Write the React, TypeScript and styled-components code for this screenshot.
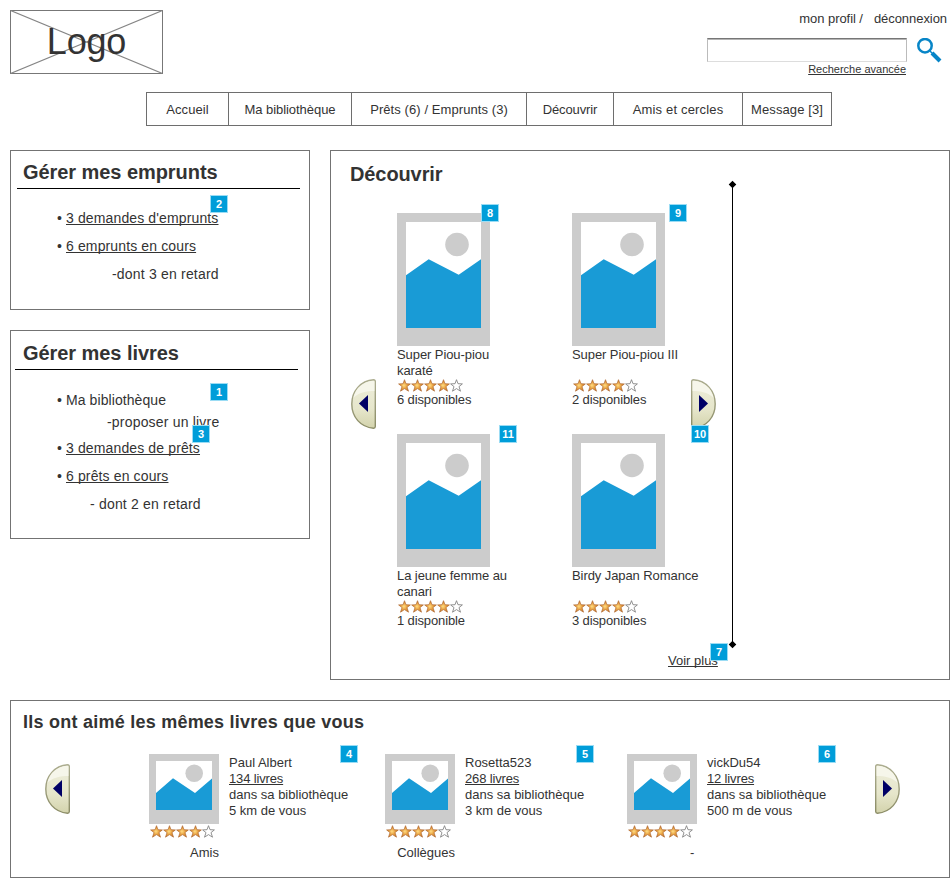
import React from "react";
import styled, { createGlobalStyle } from "styled-components";

const GlobalStyle = createGlobalStyle`
  * { box-sizing: border-box; }
  body {
    margin: 0;
    background: #fff;
    color: #333;
    font-family: "Liberation Sans", Arial, sans-serif;
    font-size: 13px;
    line-height: 16px;
  }
  h1, h2, p, ul { margin: 0; padding: 0; }
  svg { display: block; flex: none; }
`;

const Page = styled.div`
  width: 950px;
  height: 878px;
  overflow: hidden;
`;

const Header = styled.header`
  display: flex;
  justify-content: space-between;
  height: 92px;
  padding: 10px 3px 0 10px;
`;

const LogoBox = styled.div`
  position: relative;
  width: 153px;
  height: 64px;
`;

const LogoText = styled.h1`
  position: absolute;
  inset: 0;
  font-size: 36px;
  font-weight: 400;
  line-height: 64px;
  letter-spacing: -0.2px;
  text-align: center;
`;

const HeaderTools = styled.div`
  display: flex;
  flex-direction: column;
  width: 240px;
`;

const AccountLinks = styled.div`
  display: flex;
  justify-content: flex-end;
  gap: 11px;
  height: 28px;
  padding-top: 1px;
  letter-spacing: -0.06px;
  white-space: nowrap;
`;

const SearchRow = styled.div`
  display: flex;
  gap: 10px;
  height: 24px;
`;

const SearchInput = styled.input`
  width: 200px;
  height: 24px;
  padding: 0 4px;
  border: 1px solid #bbb;
  border-top: 1px solid #767676;
  border-bottom-color: #ddd;
  box-shadow: inset 0 1px 0 #b4b4b4;
  outline: none;
`;

const Link = styled.a<{ $track?: number }>`
  color: #333;
  text-decoration: underline;
  text-decoration-thickness: 1px;
  text-decoration-skip-ink: none;
  text-underline-offset: 1px;
  letter-spacing: ${(p) => p.$track ?? 0}px;
`;

const AdvancedSearch = styled.div`
  width: 199px;
  font-size: 11px;
  line-height: 14px;
  text-align: right;
`;

const Nav = styled.nav`
  display: flex;
  width: 686px;
  height: 34px;
  margin-left: 146px;
  border: 1px solid #6e6e6e;
  border-right: 0;
`;

const NavItem = styled.a<{ $width: number; $track?: number }>`
  width: ${(p) => p.$width}px;
  border-right: 1px solid #6e6e6e;
  line-height: 33px;
  text-align: center;
  white-space: nowrap;
  letter-spacing: ${(p) => p.$track ?? 0}px;
`;

const Main = styled.main`
  display: grid;
  grid-template-columns: 300px 620px;
  gap: 20px;
  padding: 24px 0 0 10px;
`;

const Sidebar = styled.div`
  display: flex;
  flex-direction: column;
  gap: 20px;
`;

const Panel = styled.section<{ $height: number }>`
  position: relative;
  height: ${(p) => p.$height}px;
  border: 1px solid #737373;
`;

const SidebarTitle = styled.h2<{ $indent: number; $height: number }>`
  width: 283px;
  height: ${(p) => p.$height}px;
  margin-left: ${(p) => p.$indent}px;
  padding: ${(p) => p.$height - 29}px 0 0 ${(p) => 12 - p.$indent}px;
  border-bottom: 1px solid #000;
  font-size: 20px;
  line-height: 24px;
  letter-spacing: -0.06px;
`;

const Entries = styled.ul<{ $top: number }>`
  padding: ${(p) => p.$top}px 0 0 46px;
  font-size: 14px;
  list-style: none;
`;

const Entry = styled.li<{ $height?: number; $indent?: number }>`
  height: ${(p) => p.$height ?? 28}px;
  padding-left: ${(p) => p.$indent ?? 0}px;
  line-height: 28px;
  white-space: nowrap;
  letter-spacing: ${(p) => (p.$indent ? 0.19 : 0.08)}px;
`;

const Bullet = styled.span`
  display: inline-block;
  width: 9px;
`;

const Badge = styled.span<{ $x: number; $y: number }>`
  position: absolute;
  left: ${(p) => p.$x}px;
  top: ${(p) => p.$y}px;
  z-index: 1;
  width: 18px;
  height: 18px;
  border: 1px solid #9bdcf4;
  background: #009dd9;
  color: #fff;
  font-size: 11px;
  font-weight: 700;
  line-height: 16px;
  text-align: center;
`;

const DiscoverPanel = styled(Panel)`
  display: flex;
  gap: 12px;
`;

const DiscoverContent = styled.div`
  width: 385px;
`;

const DiscoverTitle = styled.h2`
  height: 62px;
  padding: 11px 0 0 19px;
  font-size: 20px;
  line-height: 24px;
  letter-spacing: -0.1px;
`;

const Carousel = styled.div`
  display: flex;
  padding-left: 20px;
`;

const BookArrow = styled.div<{ $gap?: number }>`
  margin-top: 166px;
  margin-right: ${(p) => p.$gap ?? 0}px;
`;

const Books = styled.div`
  display: grid;
  grid-template-columns: 175px 119px;
  grid-auto-rows: 221px;
`;

const BookTitle = styled.p`
  height: 33px;
  padding-top: 1px;
  white-space: pre;
  letter-spacing: -0.08px;
`;

const Stock = styled.p`
  line-height: 15px;
  letter-spacing: -0.12px;
`;

const MoreRow = styled.div`
  margin-top: -2px;
  padding-left: 337px;
  white-space: nowrap;
`;

const DividerSlot = styled.div`
  margin-top: 29px;
`;

const Readers = styled(Panel)`
  margin: 20px 0 0 10px;
`;

const ReadersTitle = styled.h2`
  height: 53px;
  padding: 9px 0 0 12px;
  font-size: 18px;
  line-height: 24px;
  letter-spacing: 0.24px;
`;

const ReaderRow = styled.div`
  display: grid;
  grid-template-columns: 104px 236px 242px 248px 25px;
  padding-left: 34px;
`;

const ReaderArrow = styled.div`
  margin-top: 10px;
`;

const Reader = styled.div`
  display: flex;
  gap: 10px;
`;

const Portrait = styled.div`
  width: 70px;
`;

const Circle = styled.p`
  margin-top: 7px;
  text-align: right;
  white-space: pre;
`;

const ReaderInfo = styled.div`
  padding-top: 1px;
  white-space: nowrap;
`;

const StarStrip = styled.div`
  height: 13px;
`;

const PortraitStars = styled(StarStrip)`
  margin-top: 1px;
`;

type PlaceholderProps = {
  w: number;
  h: number;
  pad: number;
  inner: [number, number];
  mountain: string;
  sun: [number, number, number];
};

function Placeholder({ w, h, pad, inner, mountain, sun }: PlaceholderProps) {
  return (
    <svg width={w} height={h}>
      <rect width={w} height={h} fill="#ccc" />
      <rect x={pad} y={pad} width={inner[0]} height={inner[1]} fill="#fff" />
      <circle cx={sun[0]} cy={sun[1]} r={sun[2]} fill="#ccc" />
      <path d={mountain} fill="#199bd6" />
    </svg>
  );
}

const Cover = () => (
  <Placeholder w={93} h={133} pad={9} inner={[75, 106]} mountain="M9 62.2 31.7 46.3 61.7 61.8 84 46.3V115H9Z" sun={[60, 31.5, 11.8]} />
);

const Avatar = () => (
  <Placeholder w={70} h={70} pad={7} inner={[56, 49]} mountain="M7 39 24 24.2 46 39 63 24.4V56H7Z" sun={[45.2, 19.3, 8.8]} />
);

const STAR = "M6.5.7 8 4.7 12.4 4.9 9 7.6 10.5 12.2 6.5 9.6 2.5 12.2 4 7.6.6 4.9 5 4.7Z";

function Stars() {
  return (
    <svg width="67" height="13">
      <defs>
        <radialGradient id="gold" cx="45%" cy="50%" r="55%">
          <stop offset="0" stopColor="#ffdc82" />
          <stop offset=".5" stopColor="#e8a040" />
          <stop offset="1" stopColor="#c4742a" />
        </radialGradient>
      </defs>
      {[0, 1, 2, 3].map((i) => (
        <path key={i} d={STAR} transform={`translate(${1 + i * 13} 0)`} fill="url(#gold)" stroke="#b06a34" strokeWidth=".7" />
      ))}
      <path d={STAR} transform="translate(53 0)" fill="#fff" stroke="#858585" strokeWidth=".9" />
    </svg>
  );
}

function Arrow({ right }: { right?: boolean }) {
  return (
    <svg width="25" height="50" viewBox="0 0 25 50">
      <defs>
        <linearGradient id="shell" x1="0" y1="0" x2="0" y2="1">
          <stop offset="0" stopColor="#eeeedb" />
          <stop offset=".6" stopColor="#e6e6cb" />
          <stop offset="1" stopColor="#d3d3ac" />
        </linearGradient>
        <linearGradient id="rim" x1="0" y1="0" x2="0" y2="1">
          <stop offset="0" stopColor="#acad90" />
          <stop offset="1" stopColor="#8b8c66" />
        </linearGradient>
      </defs>
      <g transform={right ? "translate(25 0) scale(-1 1)" : undefined}>
        <path d="M22.6.8C9.5 1.8.8 12 .8 25S9.5 48.2 22.6 49.2Q24.3 49.2 24.3 47.5V2.5Q24.3.8 22.6.8Z" fill="url(#shell)" stroke="url(#rim)" strokeWidth="1.4" />
        <path d="M22.4 1.8C12 2.6 4.6 9 2.3 19 8 13.5 15 12 23.4 12V3Q23.4 1.8 22.4 1.8Z" fill="#f6f6ea" />
        <path d="M8 24.5 17 16V33Z" fill="#006" />
      </g>
    </svg>
  );
}

function LogoCross() {
  return (
    <svg width="153" height="64" fill="none" stroke="#777">
      <rect x=".5" y=".5" width="152" height="63" />
      <path d="M.5.5 152.5 63.5M.5 63.5 152.5.5" stroke="#858585" strokeWidth="1.2" />
    </svg>
  );
}

function Magnifier() {
  return (
    <svg width="26" height="26" fill="none" stroke="#0785c7">
      <circle cx="8" cy="7.7" r="6.7" strokeWidth="2.5" />
      <path d="M13 13 16 16" strokeWidth="1.5" />
      <path d="M15 15 23 23" strokeWidth="4" />
    </svg>
  );
}

function Divider() {
  return (
    <svg width="9" height="470">
      <path d="M4 4.5H5V464.5H4Z" />
      <path d="M4.5.7 8.3 4.5 4.5 8.3.7 4.5ZM4.5 460.7 8.3 464.5 4.5 468.3.7 464.5Z" />
    </svg>
  );
}

const NAV = [
  { label: "Accueil", width: 82, track: 0.1 },
  { label: "Ma bibliothèque", width: 123, track: -0.05 },
  { label: "Prêts (6) / Emprunts (3)", width: 175, track: 0.08 },
  { label: "Découvrir", width: 87, track: -0.12 },
  { label: "Amis et cercles", width: 129, track: 0.17 },
  { label: "Message [3]", width: 89, track: 0.1 },
];

const BOOKS = [
  { title: "Super Piou-piou\nkaraté", stock: "6 disponibles" },
  { title: "Super Piou-piou III", stock: "2 disponibles" },
  { title: "La jeune femme au\ncanari", stock: "1 disponible" },
  { title: "Birdy Japan Romance", stock: "3 disponibles" },
];

const READERS = [
  { name: "Paul Albert", count: "134 livres", distance: "5 km de vous", circle: "Amis" },
  { name: "Rosetta523", count: "268 livres", distance: "3 km de vous", circle: "Collègues" },
  { name: "vickDu54", count: "12 livres", distance: "500 m de vous", circle: "-\u2009" },
];

export default function App() {
  return (
    <Page>
      <GlobalStyle />
      <Header>
        <LogoBox>
          <LogoCross />
          <LogoText>Logo</LogoText>
        </LogoBox>
        <HeaderTools>
          <AccountLinks>
            <span>mon profil /</span>
            <span>déconnexion</span>
          </AccountLinks>
          <SearchRow>
            <SearchInput aria-label="Recherche" />
            <Magnifier />
          </SearchRow>
          <AdvancedSearch>
            <Link>Recherche avancée</Link>
          </AdvancedSearch>
        </HeaderTools>
      </Header>

      <Nav>
        {NAV.map((n) => (
          <NavItem key={n.label} $width={n.width} $track={n.track}>{n.label}</NavItem>
        ))}
      </Nav>

      <Main>
        <Sidebar>
          <Panel $height={160}>
            <SidebarTitle $indent={6} $height={38}>Gérer mes emprunts</SidebarTitle>
            <Entries $top={15}>
              <Entry><Bullet>•</Bullet><Link $track={0.13}>3 demandes d'emprunts</Link></Entry>
              <Entry><Bullet>•</Bullet><Link $track={0.13}>6 emprunts en cours</Link></Entry>
              <Entry $indent={55}>-dont 3 en retard</Entry>
            </Entries>
            <Badge $x={199} $y={44}>2</Badge>
          </Panel>
          <Panel $height={209}>
            <SidebarTitle $indent={4} $height={39}>Gérer mes livres</SidebarTitle>
            <Entries $top={16}>
              <Entry $height={22}><Bullet>•</Bullet>Ma bibliothèque</Entry>
              <Entry $height={26} $indent={50}>-proposer un livre</Entry>
              <Entry><Bullet>•</Bullet><Link $track={0.13}>3 demandes de prêts</Link></Entry>
              <Entry><Bullet>•</Bullet><Link $track={0.13}>6 prêts en cours</Link></Entry>
              <Entry $indent={33}>- dont 2 en retard</Entry>
            </Entries>
            <Badge $x={199} $y={52}>1</Badge>
            <Badge $x={181} $y={94}>3</Badge>
          </Panel>
        </Sidebar>

        <DiscoverPanel $height={530}>
          <DiscoverContent>
            <DiscoverTitle>Découvrir</DiscoverTitle>
            <Carousel>
              <BookArrow $gap={21}><Arrow /></BookArrow>
              <Books>
                {BOOKS.map((b) => (
                  <div key={b.title}>
                    <Cover />
                    <BookTitle>{b.title}</BookTitle>
                    <StarStrip><Stars /></StarStrip>
                    <Stock>{b.stock}</Stock>
                  </div>
                ))}
              </Books>
              <BookArrow><Arrow right /></BookArrow>
            </Carousel>
            <MoreRow><Link>Voir plus</Link></MoreRow>
          </DiscoverContent>
          <DividerSlot><Divider /></DividerSlot>
          <Badge $x={150} $y={53}>8</Badge>
          <Badge $x={338} $y={53}>9</Badge>
          <Badge $x={168} $y={274}>11</Badge>
          <Badge $x={360} $y={274}>10</Badge>
          <Badge $x={379} $y={492}>7</Badge>
        </DiscoverPanel>
      </Main>

      <Readers $height={178}>
        <ReadersTitle>Ils ont aimé les mêmes livres que vous</ReadersTitle>
        <ReaderRow>
          <ReaderArrow><Arrow /></ReaderArrow>
          {READERS.map((r) => (
            <Reader key={r.name}>
              <Portrait>
                <Avatar />
                <PortraitStars><Stars /></PortraitStars>
                <Circle>{r.circle}</Circle>
              </Portrait>
              <ReaderInfo>
                <p>{r.name}</p>
                <p><Link $track={-0.15}>{r.count}</Link></p>
                <p>dans sa bibliothèque</p>
                <p>{r.distance}</p>
              </ReaderInfo>
            </Reader>
          ))}
          <ReaderArrow><Arrow right /></ReaderArrow>
        </ReaderRow>
        <Badge $x={329} $y={44}>4</Badge>
        <Badge $x={565} $y={44}>5</Badge>
        <Badge $x={807} $y={44}>6</Badge>
      </Readers>
    </Page>
  );
}
